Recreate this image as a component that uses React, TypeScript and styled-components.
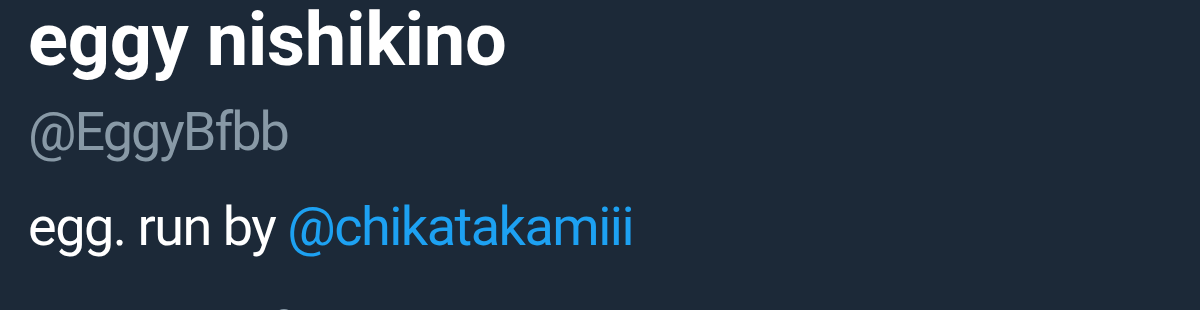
import React from 'react';
import styled, { createGlobalStyle } from 'styled-components';

const GlobalStyle = createGlobalStyle`
  html, body {
    margin: 0;
    padding: 0;
    background: #1c2938;
  }
  body {
    font-family: Roboto, "Noto Sans", sans-serif;
    overflow: hidden;
  }
`;

const App = () => {
  return (
    <>
      <GlobalStyle />
      <ProfileHeader>
        <Name>eggy nishikino</Name>
        <Handle>@EggyBfbb</Handle>
        <Bio>
          egg. run by <Mention>@chikatakamiii</Mention>
        </Bio>
        <MetaRow>
          <MetaItem>
            <PinIcon viewBox="0 0 24 24">
              <path d="M12 2C8.1 2 5 5.1 5 9c0 5.2 7 13 7 13s7-7.8 7-13c0-3.9-3.1-7-7-7zm0 9.5a2.5 2.5 0 1 1 0-5 2.5 2.5 0 0 1 0 5z" />
            </PinIcon>
            <span>Nest</span>
          </MetaItem>
          <MetaItem>
            <BalloonIcon viewBox="0 0 24 24">
              <path d="M12 1.5c-4.4 0-7.5 3.4-7.5 7.6 0 4.6 3.6 8.3 6.5 8.9l-1 1.5h4l-1-1.5c2.9-.6 6.5-4.3 6.5-8.9 0-4.2-3.1-7.6-7.5-7.6z" />
            </BalloonIcon>
            <span>Born</span>
          </MetaItem>
        </MetaRow>
      </ProfileHeader>
    </>
  );
};

export default App;

const ProfileHeader = styled.section`
  display: flex;
  flex-direction: column;
  padding-left: 28px;
  height: 310px;
  overflow: hidden;
`;

const Name = styled.h1`
  margin: 0;
  font-size: 74px;
  line-height: 80px;
  font-weight: 700;
  color: #ffffff;
  letter-spacing: -0.3px;
`;

const Handle = styled.div`
  margin-top: 20px;
  font-size: 54px;
  line-height: 64px;
  letter-spacing: -2px;
  color: #8899a6;
`;

const Bio = styled.p`
  margin: 31px 0 0;
  font-size: 54px;
  line-height: 64px;
  letter-spacing: -1.5px;
  color: #ffffff;
`;

const Mention = styled.span`
  color: #1da1f2;
`;

const MetaRow = styled.div`
  display: flex;
  align-items: flex-start;
  gap: 86px;
  margin-top: 46px;
  padding-left: 14px;
  font-size: 54px;
  line-height: 64px;
  letter-spacing: -1.5px;
  color: #8899a6;
`;

const MetaItem = styled.div`
  display: flex;
  align-items: flex-start;
  gap: 12px;
`;

const PinIcon = styled.svg`
  width: 22px;
  height: 30px;
  margin-top: 2px;
  fill: #8899a6;
`;

const BalloonIcon = styled.svg`
  width: 30px;
  height: 34px;
  fill: #8899a6;
`;
